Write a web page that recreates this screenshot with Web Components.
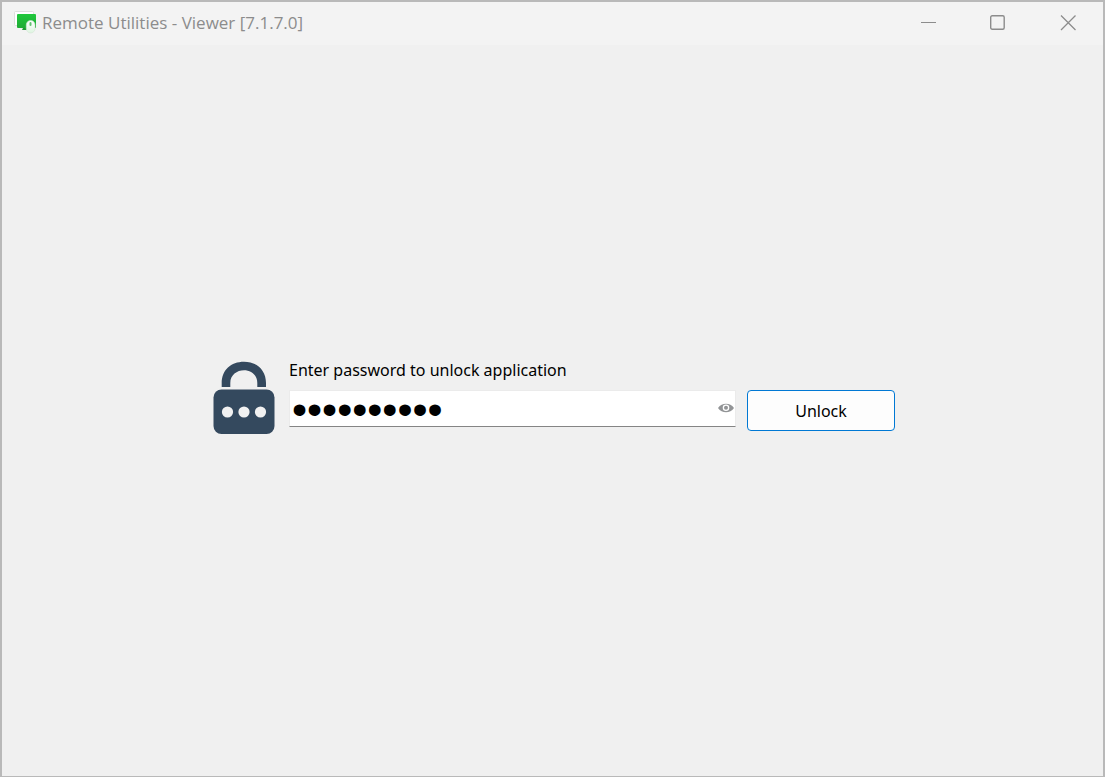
<!DOCTYPE html>
<html lang="en">
<head>
<meta charset="utf-8">
<title>Remote Utilities - Viewer</title>
<style>
  html, body { height: 100%; margin: 0; }
  body { font-family: "Noto Sans", "Open Sans", sans-serif; color: #000; background: #f0f0f0; }
</style>
</head>
<body>
<app-window>
  <title-bar slot="title" caption="Remote Utilities - Viewer [7.1.7.0]"></title-bar>
  <unlock-form></unlock-form>
</app-window>
<script>
class Base extends HTMLElement {
  constructor() {
    super();
    this.attachShadow({ mode: "open" }).innerHTML = this.constructor.markup;
  }
}

customElements.define("app-window", class extends Base {
  static markup = `
    <style>
      :host { display: flex; flex-direction: column; box-sizing: border-box; min-height: 100vh;
        border: 2px solid #b9b9b9; border-bottom-width: 1px; background: #f0f0f0; }
      main { flex: 1; display: flex; align-items: center; justify-content: center; padding: 0 16px 30px 19px; }
    </style>
    <slot name="title"></slot>
    <main><slot></slot></main>`;
});

customElements.define("title-bar", class extends Base {
  static markup = `
    <style>
      :host { display: block; background: #f3f3f3; color: #8c8c8c; }
      header { display: flex; align-items: center; box-sizing: border-box; height: 43px; padding: 0 0 2px 11px; }
      h1 { flex: 1; margin: 0 0 0 5px; font-size: 17px; line-height: 24px; font-weight: 400; white-space: nowrap;
        font-family: "Open Sans", "Noto Sans", sans-serif; }
      .controls { display: flex; align-self: stretch; }
      button { display: flex; align-items: center; justify-content: center; width: 70px; padding: 0; border: 0; background: none; color: inherit; }
      svg { display: block; }
    </style>
    <header>
      <svg width="24" height="25" viewBox="0 0 24 25" aria-hidden="true">
        <defs>
          <linearGradient id="screen" x1="0" y1="0" x2="0" y2="1"><stop offset="0" stop-color="#20c83c"/><stop offset="1" stop-color="#20ab36"/></linearGradient>
          <linearGradient id="mouse" x1="0" y1="0" x2="0" y2="1"><stop offset="0" stop-color="#fff"/><stop offset="1" stop-color="#def5e0"/></linearGradient>
        </defs>
        <rect x="1.500" y="1.500" width="19" height="14" rx="1" fill="#fff" stroke="#dedede"/>
        <rect x="4" y="4" width="19" height="14" rx="1" fill="url(#screen)"/>
        <path d="M10 18h6v2H9z" fill="#209c33"/>
        <rect x="13.300" y="10.500" width="8.700" height="12.500" rx="4.350" fill="url(#mouse)" stroke="#d4e4d5" stroke-width=".6"/>
        <rect x="16.500" y="12" width="2" height="4" rx="1" fill="#5fc271"/>
      </svg>
      <h1></h1>
      <div class="controls">
        <button type="button" aria-label="Minimize"><svg width="16" height="16" viewBox="0 0 16 16"><path d="M1 7.500h15" stroke="currentColor"/></svg></button>
        <button type="button" aria-label="Maximize"><svg width="16" height="16" viewBox="0 0 16 16"><rect x=".7" y=".7" width="13.500" height="13.500" rx="1.500" fill="none" stroke="currentColor" stroke-width="1.400"/></svg></button>
        <button type="button" aria-label="Close"><svg width="16" height="16" viewBox="0 0 16 16"><path d="M1 .5l14.500 14.500M15.500 .5L1 15" stroke="currentColor" stroke-width="1.300"/></svg></button>
      </div>
    </header>`;
  connectedCallback() {
    this.shadowRoot.querySelector("h1").textContent = this.getAttribute("caption");
  }
});

customElements.define("lock-icon", class extends Base {
  static markup = `
    <style>:host { display: block; } svg { display: block; }</style>
    <svg width="62" height="73" viewBox="0 0 62 73" aria-hidden="true">
      <path d="M8.700 26V22C8.700 9 18 .7 31 .7S53 9 53 22V26H44.300V22C44.300 14 38 9.300 31 9.300S17.300 14 17.300 22V26z" fill="#34495e"/>
      <rect x=".5" y="28.500" width="61" height="44.500" rx="8" fill="#34495e"/>
      <g fill="#f1f1f1"><circle cx="14.500" cy="51" r="5.600"/><circle cx="31" cy="51" r="5.600"/><circle cx="47.500" cy="51" r="5.600"/></g>
    </svg>`;
});

customElements.define("unlock-form", class extends Base {
  static markup = `
    <style>
      :host { display: block; flex: 0 1 682px; min-width: 0; }
      form { display: grid; grid-template-columns: auto minmax(0, 1fr) 148px; grid-template-rows: 20px 41px; gap: 10px 11px; align-items: start; margin: 0; }
      lock-icon { grid-row: 1 / 3; align-self: end; margin: 0 3px -3px 0; }
      label { grid-column: 2 / 4; font-size: 16px; line-height: 20px; }
      .field { display: flex; box-sizing: border-box; height: 37px; background: #fff; border: 1px solid #ebebeb; border-bottom-color: #858585; }
      input { flex: 1; box-sizing: border-box; min-width: 0; height: 35px; padding: 2px 0 0 2px; border: 0; outline: 0; background: none; color: #000; font: 43px "Liberation Sans", sans-serif; }
      .field button { display: flex; align-items: center; width: 17px; padding: 0 0 2px; border: 0; background: none; }
      .field svg { flex: none; }
      .unlock { height: 41px; border: 1px solid #0078d4; border-radius: 4px; background: #fdfdfd; color: #000; font: inherit; font-size: 16px; }
    </style>
    <form onsubmit="return false">
      <lock-icon></lock-icon>
      <label for="password">Enter password to unlock application</label>
      <div class="field">
        <input id="password" type="password" value="0123456789" autocomplete="off">
        <button type="button" aria-label="Show password">
          <svg width="16" height="10" viewBox="0 0 16 10"><path fill="#929496" fill-rule="evenodd" d="M0 5C2 2 5 .7 8 .7S14 2 16 5c-2 3-5 4.300-8 4.300S2 8 0 5zM8 1.500a3.300 3.200 0 1 0 0 6.400 3.300 3.200 0 0 0 0-6.400z"/><circle cx="8" cy="4.700" r="2" fill="#929496"/></svg>
        </button>
      </div>
      <button class="unlock" type="submit">Unlock</button>
    </form>`;
});
</script>
</body>
</html>
